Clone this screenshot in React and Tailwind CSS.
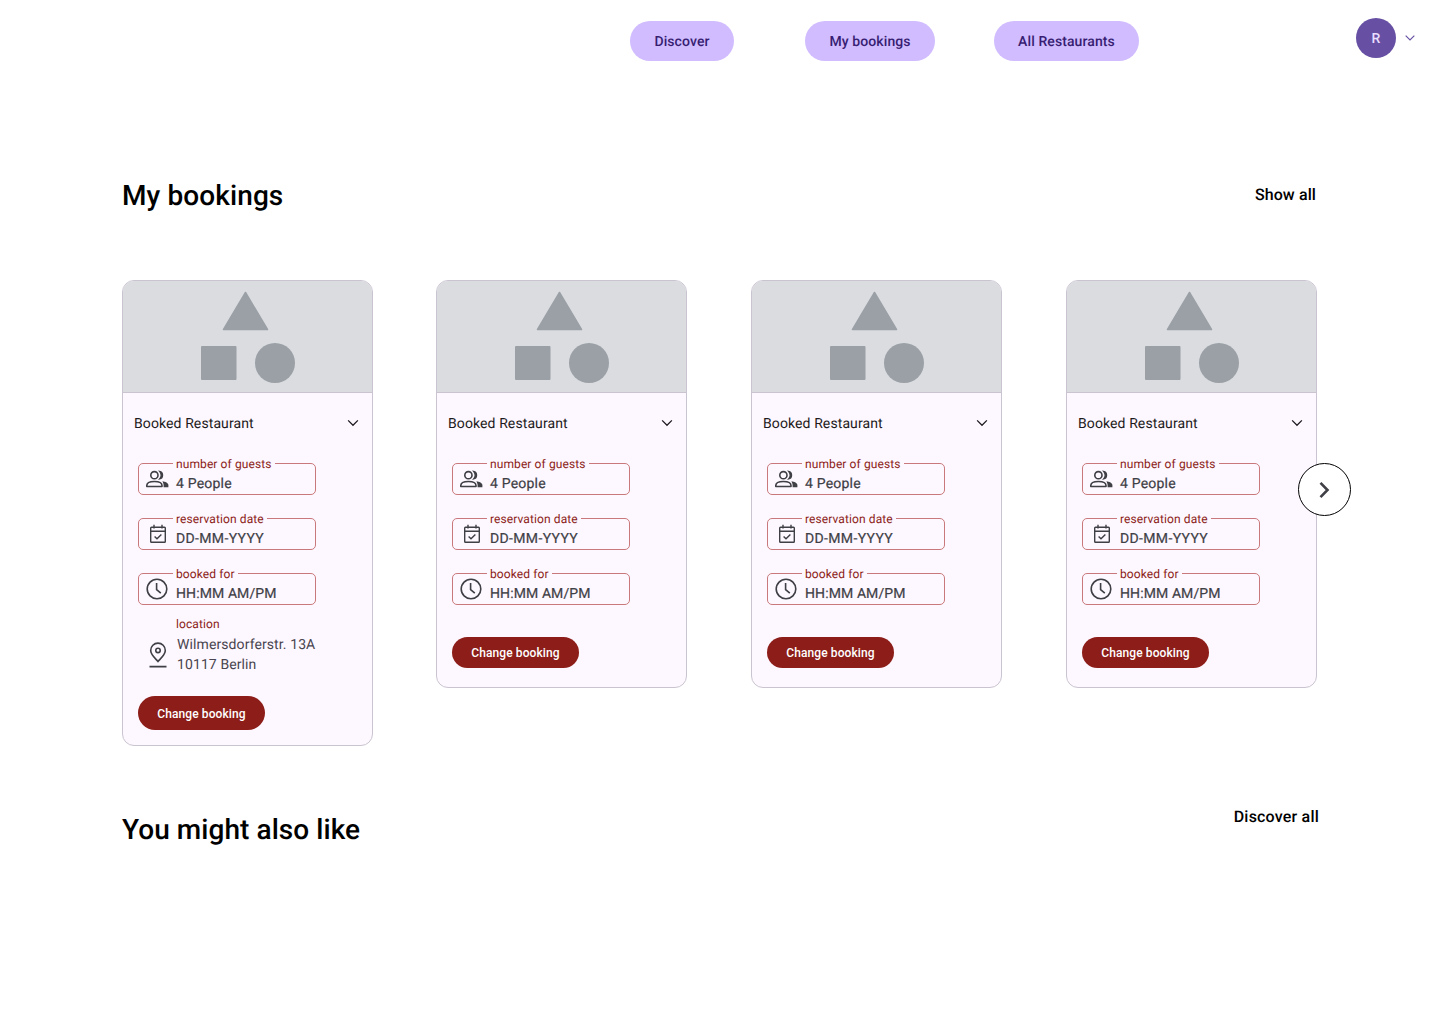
import React from "react";

const Chevron = ({ className }) => (
  <svg viewBox="0 0 24 24" className={className} fill="none" stroke="currentColor" strokeWidth="1.7">
    <path d="M5.5 8.5 12 15l6.5-6.5" />
  </svg>
);

const People = () => (
  <svg width="24" height="18" viewBox="0 0 24 18" fill="none">
    <circle cx="8.4" cy="5.2" r="3.6" stroke="#3f3f46" strokeWidth="1.6" />
    <path d="M13.6 1.4a3.9 3.9 0 0 1 0 7.6 6 6 0 0 0 0-7.6Z" fill="#3f3f46" stroke="#3f3f46" strokeWidth="1.2" />
    <path d="M.8 16.5v-1c0-2.6 3.3-4 7.6-4s7.6 1.4 7.6 4v1Z" stroke="#3f3f46" strokeWidth="1.6" strokeLinejoin="round" />
    <path d="M16.4 11.2c2.9.4 6 1.7 6 3.9v2.1h-4.8v-1.8c0-1.6-.5-3-1.2-4.2Z" fill="#3f3f46" />
  </svg>
);

const Calendar = () => (
  <svg width="18" height="20" viewBox="0 0 18 20" fill="none" stroke="#3f3f46" strokeWidth="1.4">
    <rect x="1.7" y="3.2" width="14.6" height="15" rx="0.8" />
    <path d="M1.7 7.2h14.6M5 .8v3.6M13 .8v3.6" />
    <path d="m5.6 12.4 2.4 2.4 4.4-4.4" />
  </svg>
);

const Clock = () => (
  <svg width="22" height="22" viewBox="0 0 22 22" fill="none" stroke="#3f3f46" strokeWidth="1.6">
    <circle cx="11" cy="11" r="9.8" />
    <path d="M10.6 5v6.6l4.2 3.6" />
  </svg>
);

const Pin = () => (
  <svg width="18" height="26" viewBox="0 0 18 26" fill="none" stroke="#3f3f46" strokeWidth="1.6">
    <path d="M9 19.5C5.5 15.6 1.7 12.3 1.7 8.4a7.3 7.3 0 0 1 14.6 0c0 3.9-3.8 7.2-7.3 11.1Z" />
    <circle cx="9" cy="8.4" r="2.2" />
    <path d="M.5 24.6h17" />
  </svg>
);

const Placeholder = () => (
  <svg width="96" height="92" viewBox="0 0 96 92" fill="#9aa0a6">
    <path d="M46.5 1.5 68.5 38.5H24.5Z" stroke="#9aa0a6" strokeWidth="1.5" strokeLinejoin="round" />
    <rect x="2" y="55" width="35.5" height="34" rx="1" />
    <circle cx="76" cy="72" r="20" />
  </svg>
);

const Field = ({ label, value, icon, iconBox, spacing }) => (
  <div className="relative h-8 w-[178px] rounded-[5px] border border-[#c9797b]">
    <span className="absolute left-[34px] top-[-7px] bg-[#fdf7ff] pl-[3px] pr-[3px] text-xs leading-[14px] tracking-[0.1px] text-[#8c1d18]">
      {label}
    </span>
    <div className="flex h-full items-start">
      <div className={`flex w-[37px] shrink-0 justify-center ${iconBox}`}>{icon}</div>
      <span className={`pt-[11px] text-sm leading-[18px] text-[#3f3f46] [-webkit-text-stroke:0.2px_#3f3f46] ${spacing}`}>
        {value}
      </span>
    </div>
  </div>
);

const Card = ({ location, className }) => (
  <article className={`w-[251px] shrink-0 overflow-hidden rounded-xl border border-[#cac4d0] bg-[#fdf7ff] ${location ? "h-[466px]" : "h-[408px]"} ${className}`}>
    <div className="flex h-[112px] items-start justify-center border-b border-[#cac4d0] bg-[#dadce0] pr-[2px] pt-[10px]">
      <Placeholder />
    </div>
    <div className="flex h-[60px] items-center justify-between pl-[11px] pr-[10px]">
      <span className="pt-[1px] text-sm tracking-[0.1px] text-[#1d1b20]">Booked Restaurant</span>
      <Chevron className="h-[18px] w-[18px] text-[#1d1b20]" />
    </div>
    <div className="flex flex-col gap-[23px] pl-[15px] pt-[10px]">
      <Field label="number of guests" value="4 People" icon={<People />} iconBox="pt-[6px]" spacing="tracking-[0.2px]" />
      <Field label="reservation date" value="DD-MM-YYYY" icon={<Calendar />} iconBox="pt-[5px]" spacing="tracking-[0.35px]" />
      <Field label="booked for" value="HH:MM AM/PM" icon={<Clock />} iconBox="pt-[3.5px] pr-[1px]" spacing="tracking-[0.1px]" />
    </div>
    {location && (
      <div className="pl-[15px] pt-[12px]">
        <div className="pl-[38px] text-xs leading-[14px] tracking-[0.1px] text-[#8c1d18]">location</div>
        <div className="mt-[4px] flex items-center">
          <div className="flex w-[39px] shrink-0 justify-center">
            <Pin />
          </div>
          <div className="text-sm leading-[20px] tracking-[0.1px] text-[#49454f]">
            Wilmersdorferstr. 13A
            <br />
            10117 Berlin
          </div>
        </div>
      </div>
    )}
    <div className={`pl-[15px] ${location ? "pt-[21px]" : "pt-[32px]"}`}>
      <button className={`w-[127px] rounded-full bg-[#8c1d18] pt-[1px] text-xs font-medium tracking-[0.1px] text-white ${location ? "h-[34px]" : "h-[31px]"}`}>
        Change booking
      </button>
    </div>
  </article>
);

const NavItem = ({ children, className }) => (
  <a className={`flex h-10 items-center justify-center rounded-full bg-[#d0bcff] pt-[1px] text-sm font-medium tracking-[0.1px] text-[#381e72] ${className}`}>
    {children}
  </a>
);

export default function App() {
  return (
    <div className="min-h-[1024px] bg-white font-['Roboto',sans-serif] [text-rendering:geometricPrecision]">
      <header className="flex items-start pt-[18px]">
        <nav className="ml-[630px] mt-[3px] flex">
          <NavItem className="w-[104px]">Discover</NavItem>
          <NavItem className="ml-[71px] w-[130px]">My bookings</NavItem>
          <NavItem className="ml-[59px] w-[145px]">All Restaurants</NavItem>
        </nav>
        <div className="ml-[217px] flex h-10 w-10 items-center justify-center rounded-full bg-[#6750a4] pt-[1px] text-sm font-medium text-[#eaddff]">
          R
        </div>
        <Chevron className="ml-[6px] mt-[12px] h-4 w-4 text-[#6750a4]" />
      </header>

      <main className="relative ml-[122px] w-[1197px]">
        <div className="flex items-center justify-between pr-[3px] pt-[115px]">
          <h1 className="text-[28px] font-medium leading-10 tracking-[0.1px] text-black">My bookings</h1>
          <a className="pb-[2px] text-base font-medium tracking-[0.1px] text-black">Show all</a>
        </div>

        <div className="relative mt-[64px] flex w-[1195px] items-start">
          <Card location />
          <Card className="ml-[63px]" />
          <Card className="ml-[64px]" />
          <Card className="ml-[64px]" />
          <button className="absolute left-[1176px] top-[183px] flex h-[53px] w-[53px] items-center justify-center rounded-full border border-black bg-white pr-[1px] text-[#3f3f46]">
            <svg width="24" height="24" viewBox="0 0 24 24" fill="none" stroke="currentColor" strokeWidth="2.6">
              <path d="m8.5 4.8 7 7.2-7 7.2" />
            </svg>
          </button>
        </div>

        <div className="mt-[64px] flex items-start justify-between">
          <h2 className="text-[28px] font-medium leading-10 tracking-[0.06px] text-black">You might also like</h2>
          <a className="mt-[-3px] text-base font-medium leading-5 tracking-[0.2px] text-black">Discover all</a>
        </div>
      </main>
    </div>
  );
}
